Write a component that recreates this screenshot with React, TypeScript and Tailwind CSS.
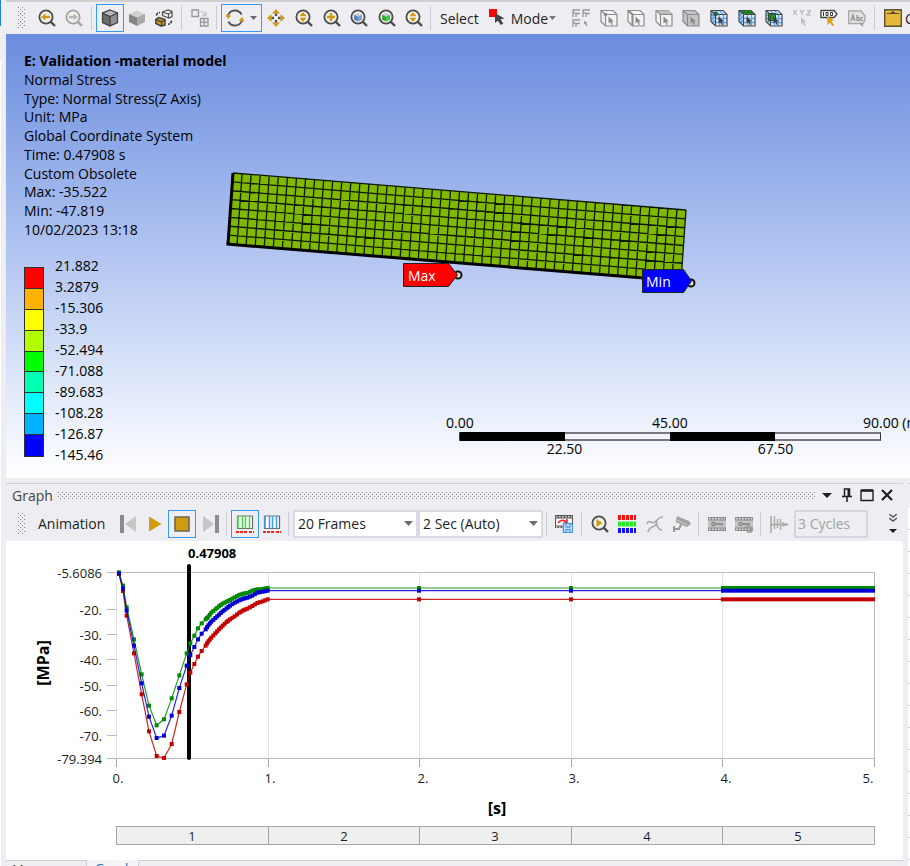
import type { ReactNode } from "react";

type Point = [number, number];

type Series = {
  name: string;
  color: string;
  levels: number[];
  plateau: number;
};

const INFO_LINES = [
  "Normal Stress",
  "Type: Normal Stress(Z Axis)",
  "Unit: MPa",
  "Global Coordinate System",
  "Time: 0.47908 s",
  "Custom Obsolete",
  "Max: -35.522",
  "Min: -47.819",
  "10/02/2023 13:18",
];

const LEGEND_VALUES = [
  "21.882",
  "3.2879",
  "-15.306",
  "-33.9",
  "-52.494",
  "-71.088",
  "-89.683",
  "-108.28",
  "-126.87",
  "-145.46",
];

const LEGEND_COLORS = [
  "bg-[#ff0000]",
  "bg-[#ffb200]",
  "bg-[#ffff00]",
  "bg-[#b2ff00]",
  "bg-[#00ff00]",
  "bg-[#00ffb2]",
  "bg-[#00ffff]",
  "bg-[#00b2ff]",
  "bg-[#0000ff]",
];

// Sample positions in plot units, three to a pixel.
const SAMPLE_X = [
  357, 369, 380, 402, 425, 447, 470, 492, 515, 538, 560, 571, 583, 594, 605,
  617, 625, 634, 646, 657, 668, 680, 690, 704, 718, 730, 742, 757, 772, 788,
  803,
];

const FINE_STEP_START = 15;

const SERIES: Series[] = [
  {
    name: "Minimum",
    color: "#c40000",
    levels: [
      102, 153, 227, 340, 463, 574, 648, 654, 612, 516, 433, 398, 372, 350, 333,
      317, 304, 293, 280, 268, 257, 246, 238, 229, 218, 211, 206, 198, 189, 184,
      178,
    ],
    plateau: 178,
  },
  {
    name: "Maximum",
    color: "#008a00",
    levels: [
      97, 137, 202, 298, 403, 497, 556, 538, 475, 406, 340, 310, 287, 265, 250,
      238, 230, 218, 208, 199, 191, 185, 180, 172, 165, 161, 159, 152, 148, 147,
      144,
    ],
    plateau: 144,
  },
  {
    name: "Average",
    color: "#0000d2",
    levels: [
      100, 146, 212, 317, 430, 530, 594, 587, 527, 444, 377, 345, 321, 298, 281,
      268, 256, 245, 234, 224, 214, 205, 197, 188, 181, 176, 173, 167, 158, 155,
      152,
    ],
    plateau: 152,
  },
];

const Y_TICKS: { label: string; y: number }[] = [
  { label: "-5.6086", y: 31 },
  { label: "-20.", y: 68 },
  { label: "-30.", y: 93 },
  { label: "-40.", y: 118 },
  { label: "-50.", y: 144 },
  { label: "-60.", y: 169 },
  { label: "-70.", y: 194 },
  { label: "-79.394", y: 217 },
];

const X_TICKS: { label: string; x: number; textX: number }[] = [
  { label: "0.", x: 110, textX: 112 },
  { label: "1.", x: 262, textX: 264 },
  { label: "2.", x: 413, textX: 417 },
  { label: "3.", x: 565, textX: 568 },
  { label: "4.", x: 716, textX: 720 },
  { label: "5.", x: 868, textX: 862 },
];

function Icon({ children }: { children: ReactNode }) {
  return (
    <svg width="18" height="18" viewBox="0 0 18 18" fill="none" aria-hidden="true">
      {children}
    </svg>
  );
}

function Tool({
  label,
  active = false,
  children,
}: {
  label: string;
  active?: boolean;
  children: ReactNode;
}) {
  return (
    <button
      type="button"
      aria-label={label}
      title={label}
      className={
        active
          ? "flex h-7 w-7 shrink-0 items-center justify-center border border-[#3399ff]"
          : "flex h-7 shrink-0 items-center justify-center"
      }
    >
      {children}
    </button>
  );
}

function Separator() {
  return <span className="h-6 w-px shrink-0 bg-[#c9cad6]" />;
}

function Grip() {
  return (
    <span className="h-[22px] w-2 shrink-0 bg-[conic-gradient(from_270deg_at_1px_1px,#85858b_90deg,transparent_0),conic-gradient(from_270deg_at_1px_1px,#85858b_90deg,transparent_0)] bg-[length:4px_4px] bg-[position:0_0,2px_2px]" />
  );
}

function Lens({
  color = "#4b4b4b",
  children,
}: {
  color?: string;
  children?: ReactNode;
}) {
  return (
    <Icon>
      <circle cx="8" cy="8" r="6.6" fill="#f3f1ea" stroke={color} strokeWidth="1.8" />
      <path d="M12.600 12.600 17 17" stroke={color} strokeWidth="2.400" />
      {children}
    </Icon>
  );
}

function UpDownMark() {
  return (
    <path d="M8 3 11 6.400V7.200H5V6.400zM8 13 5 9.600V8.800h6v.8z" fill="#d09a14" />
  );
}

function SmallCube({ front, side }: { front: string; side: string }) {
  return (
    <>
      <path d="M4 5.800 8 4 12 5.800 8 7.600z" fill="#c3cdd8" />
      <path d="M4 5.800 8 7.600V12.500L4 10.700z" fill={front} />
      <path d="M12 5.800 8 7.600V12.500l4-1.800z" fill={side} />
    </>
  );
}

function Pointer({ color = "#808080" }: { color?: string }) {
  return <path d="M8.500 7.500v7l1.800-1.500 1.300 3 1.300-.6-1.200-2.800h2.300z" fill={color} />;
}

function PickBox({ mark }: { mark: "vertex" | "edge" | "face" | "body" }) {
  return (
    <Icon>
      <path
        d="M1 1.500h12l4 4V17H5.500L1 12.500z"
        fill={mark === "body" ? "#c3c3c6" : "#f3f3f5"}
        stroke="#8c8c8c"
        strokeWidth="1.200"
      />
      {mark === "face" ? <path d="M1 1.500h12l4 4H5.500z" fill="#bdbdbf" /> : null}
      <path d="M1 1.500 5.500 5.500H17M5.500 5.500V17" stroke="#8c8c8c" strokeWidth="1.200" />
      {mark === "vertex" ? <circle cx="5.500" cy="5.500" r="1.800" fill="#8c8c8c" /> : null}
      {mark === "edge" ? (
        <path d="M1 1.500 5.500 5.500V17" stroke="#8c8c8c" strokeWidth="2" />
      ) : null}
      <Pointer color="#8a8a8a" />
    </Icon>
  );
}

function MeshBox({ mark }: { mark: "node" | "face" | "element" }) {
  return (
    <Icon>
      <path d="M1 1.500h12l4 4V17H5.500L1 12.500z" fill="#e6f0fb" />
      <path
        d="M9.500 5.500V17M13.500 5.500V17M5.500 9.500H17M5.500 13.500H17M3 3.500V14.500M1 5l4.500 4.500M1 9l4.500 4.500M5 1.500l4.500 4M9 1.500l4.500 4"
        stroke="#62a5ee"
        strokeWidth="1.400"
      />
      {mark === "node" ? <circle cx="5.500" cy="5" r="2.400" fill="#1d7a35" /> : null}
      {mark === "face" ? <path d="M1 1.500h12l4 4H5.500z" fill="#12b512" /> : null}
      {mark === "element" ? (
        <path d="M3.500 4.500h7v7h-7z" fill="#15a515" stroke="#205020" />
      ) : null}
      {mark === "face" ? (
        <path d="M5 1.500 9.500 5.500M9 1.500l4.500 4M3 3.500h12" stroke="#225522" strokeWidth=".8" />
      ) : null}
      <path
        d="M1 1.500h12l4 4V17H5.500L1 12.500zM1 1.500l4.500 4H17M5.500 5.500V17"
        stroke="#45494f"
        strokeWidth="1.200"
      />
      <Pointer color="#3d3d3d" />
    </Icon>
  );
}

function FilmKey({ looped = false }: { looped?: boolean }) {
  return (
    <Icon>
      <path d="M0 2h18v14H0z" fill="#8b8b8b" />
      <path d="M0 5.500h18v7H0z" fill="#c4c4c4" />
      <path d="M1 3.700h16M1 14.300h16" stroke="#e4e4e4" strokeWidth="1.600" strokeDasharray="1.600 1.400" />
      <circle cx="5.500" cy="9" r="1.700" stroke="#808080" strokeWidth="1.200" />
      <path d="M7.200 9H14v1.800" stroke="#808080" strokeWidth="1.300" />
      {looped ? (
        <path d="M9 15c0-5 8-4 8 0 0 3-4 3-5 1" stroke="#9c9c9c" strokeWidth="1.600" />
      ) : null}
    </Icon>
  );
}

function StripChart({ color }: { color: string }) {
  return (
    <Icon>
      <path d="M1.500.5h15v13h-15z" fill="#fff" />
      <path d="M1.500 1h15v12.500h-15z" stroke="#6a6a6a" strokeWidth="1.200" />
      <path d="M2 1v12.500M6.500 1v12.500M9.500 1v12.500M13.500 1v12.500" stroke={color} strokeWidth="1.500" />
      <path d="M0 17h18" stroke="#ff2020" strokeWidth="2" strokeDasharray="3 1 3 1 3 2" />
    </Icon>
  );
}

function Caret() {
  return (
    <svg width="9" height="5" viewBox="0 0 9 5" aria-hidden="true">
      <path d="M0 0h9L4.500 5z" fill="#6d6d6d" />
    </svg>
  );
}

function MainToolbar() {
  return (
    <div
      role="toolbar"
      className="flex h-[34px] shrink-0 items-center overflow-hidden border-t-2 border-[#cfcfcf] pl-3 text-[14px] whitespace-nowrap text-[#1e1e1e]"
    >
      <Grip />
      <div className="ml-3 flex gap-[9px]">
        <Tool label="Previous view">
          <Lens>
            <path d="M3 8 7.500 4.500v2.200H12v2.600H7.500v2.200z" fill="#d09a14" />
          </Lens>
        </Tool>
        <Tool label="Next view">
          <Lens color="#a3a3a3">
            <path d="M13 8 8.500 4.500v2.200H4v2.600h4.500v2.200z" fill="#b5b5b5" />
          </Lens>
        </Tool>
      </div>
      <span className="w-2 shrink-0" />
      <Separator />
      <span className="w-1 shrink-0" />
      <Tool label="Shaded exterior and edges" active>
        <Icon>
          <path d="M9 1 16.500 4 9 7.500 1.500 4z" fill="#b9b9b9" />
          <path d="M1.500 4 9 7.500V17L1.500 13.500z" fill="#6c6c6c" />
          <path d="M16.500 4 9 7.500V17l7.500-3.500z" fill="#919191" />
          <path d="M9 1 16.500 4v9.500L9 17l-7.500-3.500V4zM1.500 4 9 7.500 16.500 4M9 7.500V17" stroke="#3f3f3f" strokeWidth="1.200" />
        </Icon>
      </Tool>
      <div className="ml-1 flex gap-[9px]">
        <Tool label="Shaded exterior">
          <Icon>
            <path d="M9 1.500 17 5 9 8.500 1 5z" fill="#d0d0d0" />
            <path d="M1 5 9 8.500V17L1 13z" fill="#858585" />
            <path d="M17 5 9 8.500V17l8-4z" fill="#aaaaaa" />
          </Icon>
        </Tool>
        <Tool label="Section planes">
          <Icon>
            <path d="M7.500 3 13 1l4 1.500v5L14 9 7.500 6.500z" fill="#f3f3f3" stroke="#555" strokeWidth="1.300" />
            <path d="M7.500 3.200 13.500 5V9M13.500 5 17 2.800" stroke="#555" strokeWidth="1.200" />
            <path d="M.8 10.500 4 8.500l6 2V16l-3.500 1.200L.8 14.500z" fill="#cf9c20" stroke="#444" strokeWidth="1.500" />
            <path d="M1 10.800 6.500 12.800V17M6.500 12.800 10 11" stroke="#444" strokeWidth="1.300" />
            <path d="M1.500 6.500C1.700 4.500 3 3.500 5 3.500M16.500 11.500c0 2-1 3.500-3.500 3.700" stroke="#333" strokeWidth="1.500" strokeDasharray="3 1" />
          </Icon>
        </Tool>
      </div>
      <span className="w-2 shrink-0" />
      <Separator />
      <span className="w-[9px] shrink-0" />
      <Tool label="Viewports">
        <Icon>
          <path d="M1 1h6.500v6.500H1zM9.500 9.500h7.500v7.500H9.500zM13.200 9.500v7.500M9.500 13.200h7.500" stroke="#979797" strokeWidth="1.300" />
          <path d="M10 2l5 4M15 2.500V6.500h-4" stroke="#c4c4c4" strokeWidth="1.300" />
        </Icon>
      </Tool>
      <span className="w-[7px] shrink-0" />
      <Separator />
      <button
        type="button"
        aria-label="Rotate"
        className="ml-1 flex h-7 w-[41px] shrink-0 items-center justify-between border border-[#3399ff] px-1"
      >
        <Icon>
          <path d="M2.200 6A7.400 7.400 0 0 1 15.600 5.500M15.800 12A7.400 7.400 0 0 1 2.400 12.500" stroke="#555" strokeWidth="1.900" />
          <path d="M0 5.500 4.500 7 1.800 9.500zM18 12.500 13.500 11l2.700-2.500z" fill="#d09a14" stroke="#d09a14" />
        </Icon>
        <svg width="7" height="4" viewBox="0 0 7 4" aria-hidden="true">
          <path d="M0 0h7L3.500 4z" fill="#6d6d6d" />
        </svg>
      </button>
      <span className="w-[5px] shrink-0" />
      <Tool label="Pan">
        <Icon>
          <path d="M9 0l4 4.500h-8zM9 18l4-4.500h-8zM0 9l4.500-4v8zM18 9l-4.500-4v8z" fill="#d09a14" />
          <path d="M9 4.500v2.500M9 11v2.500M4.500 9h2.500M11 9h2.500" stroke="#555" strokeWidth="2.400" />
        </Icon>
      </Tool>
      <div className="ml-[10px] flex w-32 shrink-0 justify-between">
        <Tool label="Zoom">
          <Lens>
            <UpDownMark />
          </Lens>
        </Tool>
        <Tool label="Box zoom">
          <Lens>
            <path d="M8 4v8M4 8h8" stroke="#d09a14" strokeWidth="2.400" />
          </Lens>
        </Tool>
        <Tool label="Zoom to fit">
          <Lens>
            <SmallCube front="#5d86bb" side="#7ba3d6" />
          </Lens>
        </Tool>
        <Tool label="Zoom to selection">
          <Lens>
            <SmallCube front="#3ba53b" side="#35d035" />
          </Lens>
        </Tool>
        <Tool label="Magnifier window">
          <Lens>
            <UpDownMark />
          </Lens>
        </Tool>
      </div>
      <span className="w-[7px] shrink-0" />
      <Separator />
      <span className="ml-[9px]">Select</span>
      <button type="button" className="ml-[10px] flex shrink-0 items-center">
        <Icon>
          <path d="M0 0h8v8H0z" fill="#ff0000" />
          <path d="M6 4v10l2.800-2.300 3 4.300 2.500-1.500-2.800-4.200 4-.8z" fill="#444" />
        </Icon>
        <span className="ml-1">Mode</span>
        <svg className="ml-px" width="7" height="4" viewBox="0 0 7 4" aria-hidden="true">
          <path d="M0 0h7L3.500 4z" fill="#777" />
        </svg>
      </button>
      <div className="ml-4 flex w-[294px] shrink-0 justify-between">
        <Tool label="Smart select">
          <Icon>
            <path d="M1 8V1h7M1 3l3 1.500h4M4 4v4M11 8V1h7M11 3l3 1.500h4M14 4v4M1 18v-7h7M1 13l3 1.500h4M4 14v4" stroke="#979797" strokeWidth="1.300" />
            <path d="M12 12v3.500l1-.6 1.800 2.300 1-.8-1.800-2.200 1.300-.7z" fill="#999" />
          </Icon>
        </Tool>
        <Tool label="Vertex">
          <PickBox mark="vertex" />
        </Tool>
        <Tool label="Edge">
          <PickBox mark="edge" />
        </Tool>
        <Tool label="Face">
          <PickBox mark="face" />
        </Tool>
        <Tool label="Body">
          <PickBox mark="body" />
        </Tool>
        <Tool label="Node">
          <MeshBox mark="node" />
        </Tool>
        <Tool label="Element face">
          <MeshBox mark="face" />
        </Tool>
        <Tool label="Element">
          <MeshBox mark="element" />
        </Tool>
        <Tool label="Hit point coordinates">
          <Icon>
            <path d="M0 1l4 5M4 1 0 6M7 1l2 2.500L11 1M9 3.500V6M14 1.500h4L14 6h4" stroke="#b5b5b5" strokeWidth="1.200" />
            <path d="M8 8v7l1.800-1.300 1.500 3.300 1.500-.7-1.500-3.200h2z" fill="#c0c0c0" />
          </Icon>
        </Tool>
        <Tool label="Probe">
          <Icon>
            <path d="M1 1.500h13L17 5l-3 3.500H1z" fill="#fff" stroke="#444" strokeWidth="1.400" />
            <path d="M3.500 3v4M6 3.500h2v3H6zM10.500 3.500h2v3h-2z" stroke="#333" />
            <path d="M7 7l7 4-2.600 1.200L14 16l-1.500 1.300-2.700-3.800L7.500 16z" fill="#d9a21b" />
          </Icon>
        </Tool>
        <Tool label="Label">
          <Icon>
            <path d="M.7 2h12.500L17 7v4l-2 3.500H.7z" fill="#e3e3e3" stroke="#a9a9a9" strokeWidth="1.400" />
            <path d="M3 12l2-6 2 6M3.600 10h2.800M9 6v5.500h2V8.500H9M15 8.500h-2V11.500h2M12 14l3 3" stroke="#8f8f8f" strokeWidth="1.200" />
          </Icon>
        </Tool>
      </div>
      <span className="w-2 shrink-0" />
      <Separator />
      <div className="ml-[9px] flex items-center gap-[3px]">
        <Tool label="Clipboard">
          <Icon>
            <path d="M.7.7h16.600v16.600H.7z" fill="#e5b83c" stroke="#5a5238" strokeWidth="1.400" />
            <path d="M3 4.500h12M7 3.500h4M9 2v2" stroke="#5a4a20" strokeWidth="1.200" />
          </Icon>
        </Tool>
        <span>Clipboard</span>
      </div>
    </div>
  );
}

function Legend() {
  return (
    <div className="mt-[17px] flex gap-[11px]">
      <div className="mt-[11px] grid h-[190px] w-5 grid-rows-9 divide-y divide-[#303030] border border-[#303030]">
        {LEGEND_COLORS.map((color) => (
          <span key={color} className={color} />
        ))}
      </div>
      <ul className="grid h-[209px] grid-rows-10 items-center leading-5">
        {LEGEND_VALUES.map((value) => (
          <li key={value}>{value}</li>
        ))}
      </ul>
    </div>
  );
}

const MESH_COLUMNS = 50;
const MESH_ROWS = 8;
const TOP_LEFT: Point = [13, 8];
const TOP_RIGHT: Point = [466, 45];
const BOTTOM_LEFT: Point = [8, 79];
const BOTTOM_RIGHT: Point = [461, 116];

function lerp(a: Point, b: Point, f: number): Point {
  return [a[0] + (b[0] - a[0]) * f, a[1] + (b[1] - a[1]) * f];
}

function segment(a: Point, b: Point) {
  return `M${a.join(" ")}L${b.join(" ")}`;
}

function BeamModel() {
  const columns = Array.from({ length: MESH_COLUMNS + 1 }, (_, i) =>
    segment(
      lerp(TOP_LEFT, TOP_RIGHT, i / MESH_COLUMNS),
      lerp(BOTTOM_LEFT, BOTTOM_RIGHT, i / MESH_COLUMNS),
    ),
  );
  const rows = Array.from({ length: MESH_ROWS + 1 }, (_, i) =>
    segment(
      lerp(TOP_LEFT, BOTTOM_LEFT, i / MESH_ROWS),
      lerp(TOP_RIGHT, BOTTOM_RIGHT, i / MESH_ROWS),
    ),
  );

  return (
    <svg
      className="absolute top-[131px] left-[214px]"
      width="484"
      height="136"
      viewBox="0 0 484 136"
      role="img"
      aria-label="Meshed beam"
    >
      <path
        d={`M${[TOP_LEFT, TOP_RIGHT, BOTTOM_RIGHT, BOTTOM_LEFT].map((p) => p.join(" ")).join("L")}z`}
        fill="#80b800"
      />
      <path d={[...columns, ...rows].join("")} stroke="#0c1600" strokeWidth="1.300" />
      <path d={segment(TOP_LEFT, BOTTOM_LEFT)} stroke="#000" strokeWidth="3" />
      <path d="M6.500 79 461 116" stroke="#000" strokeWidth="3" />
      <circle cx="238" cy="110" r="3.500" fill="#ddd" stroke="#111" strokeWidth="2" />
      <path d="M183.500 98.500h45l9 11.500-9 11.500h-45z" fill="#ff0000" stroke="#222" />
      <text x="188" y="116" fill="#fff" fontSize="14">
        Max
      </text>
      <circle cx="471" cy="118" r="3.500" fill="#ddd" stroke="#111" strokeWidth="2" />
      <path d="M422.500 104.500h41l8 11.500-8 11.500h-41z" fill="#0000ff" stroke="#222" />
      <text x="426" y="122" fill="#fff" fontSize="14">
        Min
      </text>
    </svg>
  );
}

function ScaleRuler() {
  return (
    <div className="absolute bottom-[21px] left-[453px] w-[422px] leading-[18px] whitespace-nowrap">
      <div className="flex justify-between">
        <span className="w-0 -indent-[13px]">0.00</span>
        <span className="w-0 -indent-[18px]">45.00</span>
        <span className="w-0 -indent-[18px]">90.00 (mm)</span>
      </div>
      <div className="grid h-[9px] grid-cols-4 border border-y-2 border-x-[#333] border-y-[#77777d] bg-[#f2f2fc]">
        <span className="-my-0.5 bg-black" />
        <span />
        <span className="-my-0.5 bg-black" />
        <span />
      </div>
      <div className="grid grid-cols-2 text-center leading-4">
        <span>22.50</span>
        <span>67.50</span>
      </div>
    </div>
  );
}

function Viewport() {
  return (
    <section className="relative min-h-[440px] flex-1 overflow-hidden bg-linear-to-b from-[#6b8cde] to-white pt-[18px] pl-[18px] text-[14px] text-black">
      <div className="grid h-[187px] grid-rows-10 items-center leading-[18px]">
        <h1 className="font-bold">E: Validation -material model</h1>
        {INFO_LINES.map((line) => (
          <p key={line}>{line}</p>
        ))}
      </div>
      <Legend />
      <BeamModel />
      <ScaleRuler />
    </section>
  );
}

function PanelHeader() {
  return (
    <div className="flex h-[22px] items-center pr-[9px] pl-[6px]">
      <h2 className="text-[14px] text-[#444]">Graph</h2>
      <span className="mr-1 ml-[5px] h-[7px] flex-1 bg-[conic-gradient(from_270deg_at_1px_1px,#85858b_90deg,transparent_0),conic-gradient(from_270deg_at_1px_1px,#85858b_90deg,transparent_0)] bg-[length:4px_4px] bg-[position:0_0,2px_2px]" />
      <div className="flex items-center gap-[6px] text-[#1e1e1e]">
        <button type="button" aria-label="Window position">
          <svg width="14" height="14" viewBox="0 0 14 14">
            <path d="M2 5h10L7 10z" fill="currentColor" />
          </svg>
        </button>
        <button type="button" aria-label="Auto hide">
          <svg width="14" height="14" viewBox="0 0 14 14" fill="none" stroke="currentColor">
            <path d="M4.500 8V1h5v7M2 8.500h10M7 9v5" strokeWidth="1.500" />
            <path d="M8.500 1v7" strokeWidth="2" />
          </svg>
        </button>
        <button type="button" aria-label="Maximize">
          <svg width="14" height="14" viewBox="0 0 14 14" fill="none" stroke="currentColor">
            <path d="M1 2.500h12v10H1z" strokeWidth="1.400" />
            <path d="M1 2.500h12" strokeWidth="2.500" />
          </svg>
        </button>
        <button type="button" aria-label="Close">
          <svg width="14" height="14" viewBox="0 0 14 14" fill="none" stroke="currentColor">
            <path d="M2 2l10 10M12 2 2 12" strokeWidth="2.200" />
          </svg>
        </button>
      </div>
    </div>
  );
}

function DropDown({ label, value }: { label: string; value: string }) {
  return (
    <div className="relative flex w-[125px] shrink-0 items-center">
      <select
        aria-label={label}
        defaultValue={value}
        className="h-7 w-full appearance-none border-2 border-[#d9dae6] bg-white pl-[3px] text-[14px] text-[#1e1e1e]"
      >
        <option>{value}</option>
      </select>
      <span className="pointer-events-none absolute right-[5px]">
        <Caret />
      </span>
    </div>
  );
}

function AnimationToolbar() {
  return (
    <div
      role="toolbar"
      className="flex h-[35px] items-center overflow-hidden pr-[6px] pl-3 text-[14px] whitespace-nowrap text-[#1e1e1e]"
    >
      <Grip />
      <span className="ml-3 w-[70px] shrink-0">Animation</span>
      <div className="ml-[11px] flex items-center gap-[9px]">
        <Tool label="First frame">
          <Icon>
            <path d="M1 0h4v18H1z" fill="#8c8c8c" />
            <path d="M17 1v16L6 9z" fill="#c6c6c6" />
          </Icon>
        </Tool>
        <Tool label="Play">
          <Icon>
            <path d="M3 1.500 15.500 9 3 16.500z" fill="#cf9c10" />
          </Icon>
        </Tool>
      </div>
      <span className="w-1 shrink-0" />
      <Tool label="Stop" active>
        <Icon>
          <path d="M2 2h14v14H2z" fill="#cf9c10" stroke="#6a6558" strokeWidth="1.600" />
        </Icon>
      </Tool>
      <span className="w-[6px] shrink-0" />
      <Tool label="Last frame">
        <Icon>
          <path d="M13 0h4v18h-4z" fill="#8c8c8c" />
          <path d="M1 1v16L12 9z" fill="#c6c6c6" />
        </Icon>
      </Tool>
      <span className="w-[6px] shrink-0" />
      <Separator />
      <span className="w-1 shrink-0" />
      <Tool label="Distributed" active>
        <StripChart color="#3fdc3f" />
      </Tool>
      <span className="w-1 shrink-0" />
      <Tool label="Result sets">
        <StripChart color="#3d9df0" />
      </Tool>
      <span className="w-[7px] shrink-0" />
      <Separator />
      <span className="w-1 shrink-0" />
      <DropDown label="Frames" value="20 Frames" />
      <DropDown label="Duration" value="2 Sec (Auto)" />
      <span className="w-[3px] shrink-0" />
      <Separator />
      <span className="w-2 shrink-0" />
      <Tool label="Export video file">
        <Icon>
          <path d="M0 0h18v13H0z" fill="#555" />
          <path d="M1 3.500h16v7H1z" fill="#fff" />
          <path d="M1 1.700h16M1 12h16" stroke="#ddd" strokeWidth="1.400" strokeDasharray="1.600 1.400" />
          <path d="M3 8c3-4 7-3 9 0M12 4v4H9" stroke="#f03030" strokeWidth="1.700" />
          <path d="M8.500 8.500H16l1.500 1.500v7.500h-9z" fill="#e8f2fd" stroke="#4a96ea" strokeWidth="1.500" />
          <path d="M11 9v3h4V9M11 17.500v-3h4v3" stroke="#4a96ea" strokeWidth="1.300" />
        </Icon>
      </Tool>
      <span className="w-2 shrink-0" />
      <Separator />
      <div className="ml-[9px] flex w-[100px] shrink-0 justify-between">
        <Tool label="Zoom to range">
          <Lens>
            <path d="M5.500 4 11.500 8l-6 4z" fill="#d09a14" />
          </Lens>
        </Tool>
        <Tool label="Update contour range">
          <Icon>
            <path d="M0 2.500h18" stroke="#ff1010" strokeWidth="5" strokeDasharray="3 1" />
            <path d="M0 9h18" stroke="#20f020" strokeWidth="5" strokeDasharray="3 1" />
            <path d="M0 15.500h18" stroke="#1010ff" strokeWidth="5" strokeDasharray="3 1" />
          </Icon>
        </Tool>
        <Tool label="Trace path">
          <Icon>
            <path d="M1 9c.5-2 2-3 3.500-2S8 8 10 6s3-3.500 7-4.500M10.500 6c0 4-1 5-4 6s-4 3-4.500 5M10.500 6c0 4 1 8 5.500 9.500" stroke="#ababab" strokeWidth="1.700" />
          </Icon>
        </Tool>
        <Tool label="Camera">
          <Icon>
            <path d="M4 1 16 6l2 3-4 3L2.500 7z" fill="#a2a2a2" />
            <path d="M3.500 5 14 9.500" stroke="#d0d0d0" />
            <path d="M8 9.500 6 14H1M1 11v6" stroke="#989898" strokeWidth="2" />
          </Icon>
        </Tool>
      </div>
      <span className="w-[7px] shrink-0" />
      <Separator />
      <div className="ml-[9px] flex shrink-0 gap-[9px]">
        <Tool label="Keyframe">
          <FilmKey />
        </Tool>
        <Tool label="Loop keyframes">
          <FilmKey looped />
        </Tool>
      </div>
      <span className="w-[7px] shrink-0" />
      <Separator />
      <span className="w-[9px] shrink-0" />
      <Tool label="Vibration cycles">
        <Icon>
          <path d="M1 1v17M1 9.500h17" stroke="#9a9a9a" strokeWidth="1.300" />
          <path d="M4.500 1v13M7.500 4v9M10.500 4v11M13 7v5M15.500 8v3" stroke="#b0b0b0" strokeWidth="1.600" />
        </Icon>
      </Tool>
      <input
        aria-label="Cycles"
        disabled
        defaultValue="3 Cycles"
        className="ml-[6px] h-7 w-[74px] shrink-0 border-2 border-[#d5d6e2] pl-[2px] text-[14px] text-[#a2a4a5]"
      />
      <button type="button" aria-label="More" className="ml-auto">
        <svg width="8" height="20" viewBox="0 0 8 20" fill="none">
          <path d="M0 0l4 3 4-3M0 4l4 3 4-3" stroke="#555" strokeWidth="1.400" />
          <path d="M0 15h8l-4 4z" fill="#1e1e1e" />
        </svg>
      </button>
    </div>
  );
}

function toPlot(x: number, y: number): Point {
  return [x / 3 - 6, y / 3 - 1];
}

function SeriesLine({ series }: { series: Series }) {
  const points = SAMPLE_X.map((x, i) => toPlot(x, series.levels[i]));
  const [, level] = toPlot(0, series.plateau);
  const between = points
    .slice(FINE_STEP_START, -1)
    .map((point, i) => lerp(point, points[FINE_STEP_START + i + 1], 0.5));
  const markers: Point[] = [...points, ...between, [413, level], [565, level]];

  return (
    <g aria-label={series.name}>
      <polyline
        points={[...points, [868, level]].map((p) => p.join(",")).join(" ")}
        fill="none"
        stroke={series.color}
        strokeWidth="1.200"
        strokeOpacity=".85"
      />
      {markers.map(([x, y]) => (
        <rect key={x} x={x - 2} y={y - 2} width="4" height="4" fill={series.color} />
      ))}
      <rect x="715" y={level - 2} width="154" height="4" fill={series.color} />
    </g>
  );
}

function StressChart() {
  return (
    <svg
      className="block h-auto w-full bg-white"
      viewBox="0 0 897 319"
      role="img"
      aria-label="Stress over time"
      fontSize="13"
      fill="#1e1e1e"
    >
      <g fill="none" stroke="#bcbcbc" shapeRendering="crispEdges">
        {X_TICKS.map(({ label, x }) => (
          <g key={label}>
            <path d={`M${x + 0.5} 31V217`} stroke="#e4e4e4" />
            <path d={`M${x + 0.5} 217v9`} stroke="#a8a8a8" />
          </g>
        ))}
        <path d="M110 31.500H868.500V217.500H110" />
        {Y_TICKS.map(({ label, y }) => (
          <path key={label} d={`M101 ${y + 0.5}h10`} />
        ))}
      </g>
      {Y_TICKS.map(({ label, y }) => (
        <text key={label} x="96" y={y + 6} textAnchor="end">
          {label}
        </text>
      ))}
      {X_TICKS.map(({ label, textX }) => (
        <text key={label} x={textX} y="242" textAnchor="middle">
          {label}
        </text>
      ))}
      <path d="M183 25V217" stroke="#000" strokeWidth="4" strokeLinecap="round" />
      {SERIES.map((series) => (
        <SeriesLine key={series.name} series={series} />
      ))}
      <text x="182" y="17" fontWeight="700" fill="#000">
        0.47908
      </text>
      <text
        transform="translate(43 122) rotate(-90)"
        textAnchor="middle"
        fontSize="16"
        fontWeight="700"
        fill="#000"
      >
        [MPa]
      </text>
      <text x="491" y="273" textAnchor="middle" fontSize="16" fontWeight="700" fill="#000">
        [s]
      </text>
      {X_TICKS.slice(0, 5).map(({ x }, i) => (
        <g key={x}>
          <rect
            x={x + 0.5}
            y="285.500"
            width={X_TICKS[i + 1].x - x}
            height="18"
            fill="#efefef"
            stroke="#a6a6a6"
          />
          <text x={x + 76} y="300" textAnchor="middle">
            {i + 1}
          </text>
        </g>
      ))}
    </svg>
  );
}

function PanelTabs() {
  return (
    <nav className="flex h-[6px] shrink-0 overflow-hidden text-[13px] leading-[17px]">
      <a href="#messages" className="w-20 border-t border-[#cccedb] pl-[6px] text-[#444]">
        Messages
      </a>
      <a href="#graph" className="w-[53px] border-x border-[#cccedb] bg-[#f5f5f7] pl-2 text-[#0e70c0]">
        Graph
      </a>
      <span className="flex-1 border-t border-[#cccedb]" />
    </nav>
  );
}

export default function App() {
  return (
    <div className="flex h-screen overflow-hidden bg-[#eeeef2] font-['Open_Sans','Noto_Sans',sans-serif]">
      <div className="flex w-[6px] shrink-0 flex-col">
        <span className="h-[26px] w-px bg-[#1c82cf]" />
        <span className="mt-[34px] w-px flex-1 bg-white" />
      </div>
      <main className="flex min-w-0 flex-1 flex-col">
        <MainToolbar />
        <Viewport />
        <div className="mt-[5px] flex shrink-0">
          <div className="min-w-0 flex-1">
            <section className="border-t border-[#cccedb]">
              <PanelHeader />
              <AnimationToolbar />
              <StressChart />
            </section>
            <PanelTabs />
          </div>
          <div className="ml-[5px] w-[2px] border-t border-[#cccedb] pt-6">
            <div className="h-full bg-[repeating-linear-gradient(#fff_0_21px,#ccc_21px_22px)]" />
          </div>
        </div>
      </main>
    </div>
  );
}
